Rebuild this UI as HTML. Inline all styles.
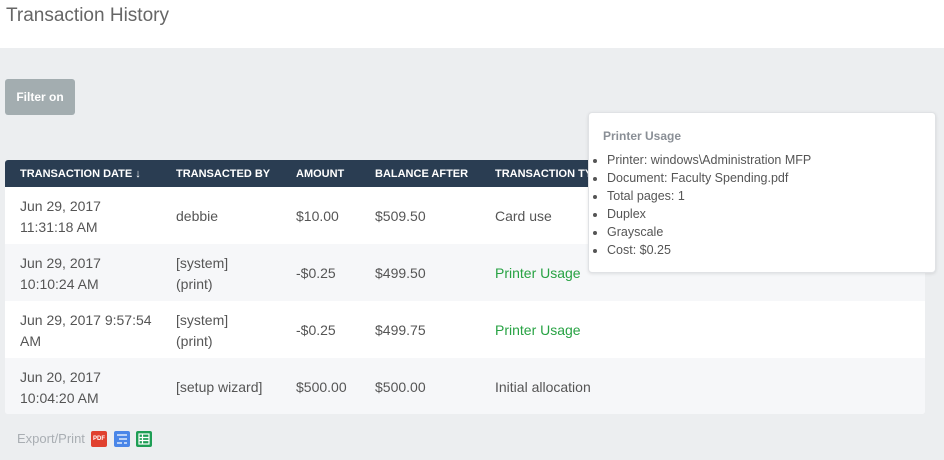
<!DOCTYPE html>
<html><head><style>
body{margin:0;width:944px;height:460px;background:#eceef0;font-family:"Liberation Sans",sans-serif;position:relative;overflow:hidden;color:#555}
.top{position:absolute;left:0;top:0;width:944px;height:48px;background:#fff}
.top h1{margin:0;position:absolute;left:6px;top:5px;font-size:19px;font-weight:normal;color:#666}
.btn{position:absolute;left:5px;top:79px;width:70px;height:36px;background:#a3adb0;border-radius:3px;color:#fff;font-size:12px;font-weight:bold;line-height:36px;text-align:center}
.tbl{position:absolute;left:5px;top:160px;width:920px;height:254px;background:#fff;border-radius:3px;overflow:hidden}
.hd{height:27px;background:#2a3d52;color:#fff;font-size:11px;font-weight:bold;position:relative}
.hd span,.row span{position:absolute}
.hd span{top:8px}
.row{height:57px;position:relative;font-size:14px}
.row.alt{background:#f6f7f9}
.row span{line-height:21px}
.g{color:#27a243}
.tip{position:absolute;left:588px;top:112px;width:348px;height:161px;background:#fff;border:1px solid #e0e2e5;border-radius:4px;box-shadow:0 1px 3px rgba(0,0,0,.1);box-sizing:border-box}
.tip b{position:absolute;left:14px;top:16px;font-size:12px;color:#8a8f96}
.tip ul{position:absolute;left:0;top:38px;margin:0;padding-left:18px;font-size:12.5px;line-height:18px;color:#555}
.exp{position:absolute;left:17px;top:431px;font-size:13px;color:#a9aeb3}
.ic{position:absolute;top:431px;width:16px;height:16px;border-radius:2px}
</style></head><body>
<div class="top"><h1>Transaction History</h1></div>
<div class="btn">Filter on</div>
<div class="tbl">
<div class="hd"><span style="left:15px">TRANSACTION DATE ↓</span><span style="left:171px">TRANSACTED BY</span><span style="left:291px">AMOUNT</span><span style="left:370px">BALANCE AFTER</span><span style="left:490px">TRANSACTION TYPE</span></div>
<div class="row"><span style="left:15px;top:9px">Jun 29, 2017<br>11:31:18 AM</span><span style="left:171px;top:19px">debbie</span><span style="left:291px;top:19px">$10.00</span><span style="left:370px;top:19px">$509.50</span><span style="left:490px;top:19px">Card use</span></div>
<div class="row alt"><span style="left:15px;top:9px">Jun 29, 2017<br>10:10:24 AM</span><span style="left:171px;top:9px">[system]<br>(print)</span><span style="left:291px;top:19px">-$0.25</span><span style="left:370px;top:19px">$499.50</span><span class="g" style="left:490px;top:19px">Printer Usage</span></div>
<div class="row"><span style="left:15px;top:9px">Jun 29, 2017 9:57:54<br>AM</span><span style="left:171px;top:9px">[system]<br>(print)</span><span style="left:291px;top:19px">-$0.25</span><span style="left:370px;top:19px">$499.75</span><span class="g" style="left:490px;top:19px">Printer Usage</span></div>
<div class="row alt"><span style="left:15px;top:9px">Jun 20, 2017<br>10:04:20 AM</span><span style="left:171px;top:19px">[setup wizard]</span><span style="left:291px;top:19px">$500.00</span><span style="left:370px;top:19px">$500.00</span><span style="left:490px;top:19px">Initial allocation</span></div>
</div>
<div class="tip"><b>Printer Usage</b><ul><li>Printer: windows\Administration MFP</li><li>Document: Faculty Spending.pdf</li><li>Total pages: 1</li><li>Duplex</li><li>Grayscale</li><li>Cost: $0.25</li></ul></div>
<div class="exp">Export/Print</div>
<div class="ic" style="left:91px;background:#e0412f;color:#fff;font-size:6px;font-weight:bold;line-height:16px;text-align:center">PDF</div>
<div class="ic" style="left:114px;background:#4a86e8"><svg width="16" height="16"><path d="M3 4h10M5 8h8M3 12h5M10 12h3" stroke="#fff" stroke-width="1.3"/></svg></div>
<div class="ic" style="left:136px;background:#1e9e55"><svg width="16" height="16"><rect x="3" y="3" width="10" height="10" fill="none" stroke="#fff" stroke-width="1.2"/><path d="M3 6.5h10M3 9.5h10M6.5 3v10" stroke="#fff" stroke-width="1.2"/></svg></div>
</body></html>
